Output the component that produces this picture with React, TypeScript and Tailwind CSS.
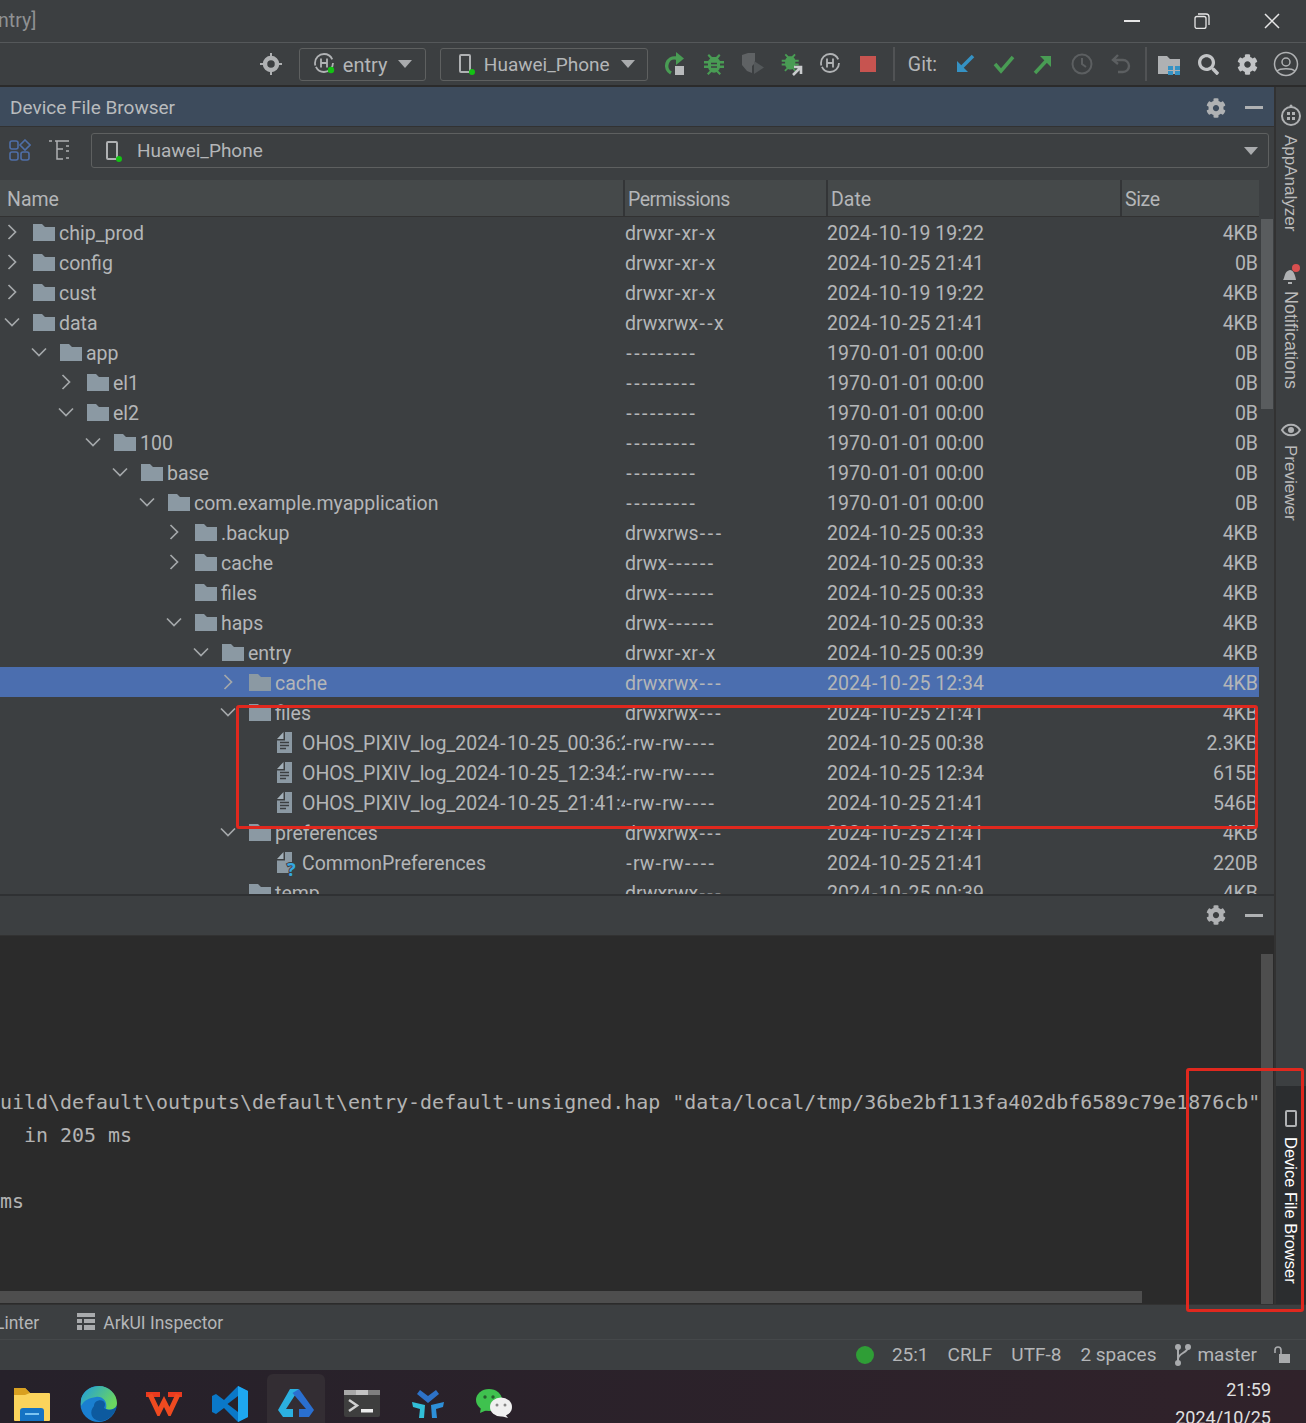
import { FaCog, FaSearch } from "react-icons/fa";

type Row = {
	name: string;
	level: number;
	arrow?: "open" | "closed";
	kind?: "folder" | "log" | "unknown";
	perm: string;
	date: string;
	size: string;
	selected?: boolean;
};

const rows: Row[] = [
	{ name: "chip_prod", level: 0, arrow: "closed", perm: "drwxr-xr-x", date: "2024-10-19 19:22", size: "4KB" },
	{ name: "config", level: 0, arrow: "closed", perm: "drwxr-xr-x", date: "2024-10-25 21:41", size: "0B" },
	{ name: "cust", level: 0, arrow: "closed", perm: "drwxr-xr-x", date: "2024-10-19 19:22", size: "4KB" },
	{ name: "data", level: 0, arrow: "open", perm: "drwxrwx--x", date: "2024-10-25 21:41", size: "4KB" },
	{ name: "app", level: 1, arrow: "open", perm: "---------", date: "1970-01-01 00:00", size: "0B" },
	{ name: "el1", level: 2, arrow: "closed", perm: "---------", date: "1970-01-01 00:00", size: "0B" },
	{ name: "el2", level: 2, arrow: "open", perm: "---------", date: "1970-01-01 00:00", size: "0B" },
	{ name: "100", level: 3, arrow: "open", perm: "---------", date: "1970-01-01 00:00", size: "0B" },
	{ name: "base", level: 4, arrow: "open", perm: "---------", date: "1970-01-01 00:00", size: "0B" },
	{ name: "com.example.myapplication", level: 5, arrow: "open", perm: "---------", date: "1970-01-01 00:00", size: "0B" },
	{ name: ".backup", level: 6, arrow: "closed", perm: "drwxrws---", date: "2024-10-25 00:33", size: "4KB" },
	{ name: "cache", level: 6, arrow: "closed", perm: "drwx------", date: "2024-10-25 00:33", size: "4KB" },
	{ name: "files", level: 6, perm: "drwx------", date: "2024-10-25 00:33", size: "4KB" },
	{ name: "haps", level: 6, arrow: "open", perm: "drwx------", date: "2024-10-25 00:33", size: "4KB" },
	{ name: "entry", level: 7, arrow: "open", perm: "drwxr-xr-x", date: "2024-10-25 00:39", size: "4KB" },
	{ name: "cache", level: 8, arrow: "closed", perm: "drwxrwx---", date: "2024-10-25 12:34", size: "4KB", selected: true },
	{ name: "files", level: 8, arrow: "open", perm: "drwxrwx---", date: "2024-10-25 21:41", size: "4KB" },
	{ name: "OHOS_PIXIV_log_2024-10-25_00:36:23.log", level: 9, kind: "log", perm: "-rw-rw----", date: "2024-10-25 00:38", size: "2.3KB" },
	{ name: "OHOS_PIXIV_log_2024-10-25_12:34:21.log", level: 9, kind: "log", perm: "-rw-rw----", date: "2024-10-25 12:34", size: "615B" },
	{ name: "OHOS_PIXIV_log_2024-10-25_21:41:44.log", level: 9, kind: "log", perm: "-rw-rw----", date: "2024-10-25 21:41", size: "546B" },
	{ name: "preferences", level: 8, arrow: "open", perm: "drwxrwx---", date: "2024-10-25 21:41", size: "4KB" },
	{ name: "CommonPreferences", level: 9, kind: "unknown", perm: "-rw-rw----", date: "2024-10-25 21:41", size: "220B" },
	{ name: "temp", level: 8, perm: "drwxrwx---", date: "2024-10-25 00:39", size: "4KB" },
];

// the reference font has much wider hyphens than Roboto
const Dashed = ({ text }: { text: string }) => (
	<>
		{text.split(/(-)/).map((part, i) =>
			part === "-" ? (
				<span key={i} className="px-[1.250px]">
					-
				</span>
			) : (
				part
			),
		)}
	</>
);

const Folder = () => (
	<svg width="22" height="17" viewBox="0 0 22 17" className="shrink-0">
		<path d="M0 0h9l3 3h10v14H0z" fill="#8b99a3" />
	</svg>
);

const FileIcon = ({ unknown }: { unknown?: boolean }) => (
	<svg width="15" height="21" viewBox="0 0 15 21" className="shrink-0 overflow-visible">
		<path d="M6.500 0v7H0z" fill="#a3b0b9" />
		<path d="M8 0h7v21H0V8.500h8z" fill="#8b99a3" />
		{!unknown && <path d="M3 10.500h9M3 13.500h9M3 16.500h6" stroke="#3c3f41" strokeWidth="1.300" />}
		{unknown && (
			<text
				x="10"
				y="24"
				fontSize="18"
				fontWeight="700"
				fill="#35a7e0"
				stroke="#3c3f41"
				strokeWidth="2"
				paintOrder="stroke"
				fontFamily="Noto Sans, sans-serif"
			>
				?
			</text>
		)}
	</svg>
);

const Arrow = ({ open }: { open?: boolean }) =>
	open ? (
		<svg width="16" height="10" viewBox="0 0 16 10" fill="none" stroke="#a4a8aa" strokeWidth="1.700">
			<path d="M1 1.500l7 7 7-7" />
		</svg>
	) : (
		<svg width="10" height="16" viewBox="0 0 10 16" fill="none" stroke="#a4a8aa" strokeWidth="1.700" className="ml-[3px]">
			<path d="M1.500 1l7 7-7 7" />
		</svg>
	);

const TreeRow = ({ row }: { row: Row }) => (
	<div className={`flex h-[30px] shrink-0 items-center pt-[3px] ${row.selected ? "bg-[#4b6eaf]" : ""}`}>
		<div className="flex h-full w-[625px] shrink-0 items-center overflow-hidden">
			<div className="shrink-0" style={{ width: row.level * 27 }} />
			<div className="-mt-[3px] flex w-[22px] shrink-0 justify-start pl-[4px]">
				{row.arrow === "closed" && <Arrow />}
				{row.arrow === "open" && <Arrow open />}
			</div>
			{row.kind === "log" || row.kind === "unknown" ? (
				<div className="-mt-[3px] flex w-[37px] shrink-0 justify-end pr-[10px]">
					<FileIcon unknown={row.kind === "unknown"} />
				</div>
			) : (
				<div className="-mt-[3px] flex w-[37px] shrink-0 pl-[11px]">
					<Folder />
				</div>
			)}
			<span className="whitespace-nowrap">
				<Dashed text={row.name} />
			</span>
		</div>
		<div className="w-[202px] shrink-0 overflow-hidden whitespace-nowrap">
			<Dashed text={row.perm} />
		</div>
		<div className="w-[360px] shrink-0 whitespace-nowrap">
			<Dashed text={row.date} />
		</div>
		<div className="flex-1 pr-[1px] text-right">{row.size}</div>
	</div>
);

const PhoneIcon = () => (
	<svg width="18" height="22" viewBox="0 0 18 22" className="shrink-0">
		<rect x="2" y="2" width="10" height="17" rx="1" fill="none" stroke="#afb1b3" strokeWidth="2" />
		<circle cx="14" cy="19" r="3" fill="#13c213" />
	</svg>
);

const HarmonyIcon = ({ dot }: { dot?: boolean }) => (
	<svg width="24" height="24" viewBox="0 0 24 24" className="shrink-0">
		<circle cx="11" cy="11" r="9" fill="none" stroke="#b1b3b5" strokeWidth="1.800" strokeDasharray="24 1.500 27 4" />
		<path d="M8 6.500v9M14 6.500v9M8 11h6" stroke="#b1b3b5" strokeWidth="1.800" fill="none" />
		{dot && <circle cx="18" cy="18" r="3.200" fill="#13c213" />}
	</svg>
);

const Caret = () => (
	<svg width="14" height="8" viewBox="0 0 14 8" className="shrink-0">
		<path d="M0 0h14L7 8z" fill="#a9abad" />
	</svg>
);

const BUG_PATH =
	"M7 2l3 3h4l3-3 1.500 1.500-2.500 3c1 .700 1.500 1.500 2 2.500H22v2.500h-4v2h4V16h-4.200c-.3 1-.8 2-1.600 2.700L19 21.500l-1.500 1.500-3-2.900c-1.600.8-3.400.8-5 0l-3 2.900L5 21.500l2.800-2.800c-.8-.7-1.300-1.700-1.600-2.700H2v-2.500h4v-2H2V9h4.200c.5-1 1-1.800 2-2.500l-2.700-3z";

const Bug = () => (
	<svg width="24" height="24" viewBox="0 0 24 24" className="shrink-0">
		<path d={BUG_PATH} fill="#499c54" />
		<path d="M9 11.500h6M9 15h6" stroke="#3c3f41" strokeWidth="1.500" />
	</svg>
);

const Divider = () => <div className="h-[34px] w-[2px] bg-[#515355]" />;

const ToolWindowLabel = ({ label, className }: { label: string; className: string }) => (
	<span className={`font-['Liberation_Sans',sans-serif] leading-[29px] whitespace-nowrap [writing-mode:vertical-rl] ${className}`}>{label}</span>
);

const PanelHeader = ({ title, blue }: { title?: string; blue?: boolean }) => (
	<div className={`flex h-[39px] shrink-0 items-center justify-between pr-[11px] pl-[10px] ${blue ? "bg-[#3d4b5c] pt-[2px]" : "bg-[#3c3f41] pb-[1px]"}`}>
		<span className="pt-[1px] text-[19px] text-[#b9bcbe]">{title}</span>
		<div className="flex items-center gap-[19px]">
			<FaCog size={20} className="text-[#afb1b3]" />
			<div className="h-[3px] w-[18px] bg-[#afb1b3]" />
		</div>
	</div>
);

const App = () => {
	return (
		<div className="relative flex h-[1423px] w-[1306px] flex-col overflow-hidden bg-[#3c3f41] font-['Roboto',sans-serif] text-[19.5px] text-[#b4b6b8]">
			{/* title bar */}
			<div className="flex h-[43px] shrink-0 items-center justify-between border-b border-[#55585a] pr-[26px]">
				<span className="-ml-[2px] text-[19.5px] text-[#8f9193]">ntry]</span>
				<div className="flex items-center gap-[54px] text-[#e6e6e6]">
					<div className="h-[2px] w-[16px] bg-[#e6e6e6]" />
					<svg width="16" height="16" viewBox="0 0 16 16" fill="none" stroke="currentColor" strokeWidth="1.300">
						<rect x="1" y="3.500" width="11" height="12" rx="2" />
						<path d="M4 1h8a3 3 0 0 1 3 3v8" />
					</svg>
					<svg width="16" height="16" viewBox="0 0 16 16" stroke="currentColor" strokeWidth="1.500">
						<path d="M1 1l14 14M15 1L1 15" />
					</svg>
				</div>
			</div>

			{/* toolbar */}
			<div className="flex h-[42px] shrink-0 items-center justify-end pr-[7px]">
				<svg width="22" height="22" viewBox="0 0 22 22" className="mr-[17px]">
					<circle cx="11" cy="11" r="6" fill="none" stroke="#afb1b3" strokeWidth="4.500" />
					<path d="M11 0v4M11 18v4M0 11h4M18 11h4" stroke="#afb1b3" strokeWidth="2" />
				</svg>
				<div className="mr-[14px] flex h-[33px] w-[127px] items-center rounded-[3px] border border-[#5e6060] pl-[13px]">
					<HarmonyIcon dot />
					<span className="ml-[6px] pt-[2px] text-[20px]">entry</span>
					<div className="ml-[11px]">
						<Caret />
					</div>
				</div>
				<div className="mr-[15px] flex h-[33px] w-[208px] items-center rounded-[3px] border border-[#5e6060] pl-[17px]">
					<PhoneIcon />
					<span className="ml-[8px] pt-[2px] text-[19px]">Huawei_Phone</span>
					<div className="ml-[11px]">
						<Caret />
					</div>
				</div>
				<div className="flex items-center gap-[15px]">
					<svg width="24" height="24" viewBox="0 0 24 24" fill="none">
						<path d="M8 21a8 8 0 0 1 5-15h3" stroke="#499c54" strokeWidth="3.500" />
						<path d="M13 0l8 6.500-8 6.500z" fill="#499c54" />
						<rect x="12" y="14" width="9" height="9" fill="#b8babc" />
					</svg>
					<Bug />
					<svg width="24" height="24" viewBox="0 0 24 24">
						<path d="M1 3l6-2h7v10l-3 3v7l-5-2-5-6z" fill="#5f6264" />
						<path d="M13 9l10 6.500L13 22z" fill="#54585a" />
					</svg>
					<svg width="24" height="24" viewBox="0 0 24 24">
						<g transform="scale(.85)">
							<path d={BUG_PATH} fill="#499c54" />
						</g>
						<path d="M13 23l7-7M14 15h7v7" stroke="#c9cbcd" strokeWidth="2.600" fill="none" />
					</svg>
					<HarmonyIcon />
					<div className="ml-[2px] h-[16px] w-[16px] bg-[#c75450]" />
					<div className="ml-[2px]">
						<Divider />
					</div>
				</div>
				<span className="ml-[13px] pt-[1px] text-[19.5px]">Git:</span>
				<div className="ml-[17px] flex items-center gap-[17px]">
					<svg width="22" height="22" viewBox="0 0 22 22" fill="none">
						<path d="M19 3L6 16" stroke="#3592c4" strokeWidth="3.500" />
						<path d="M3 8v11h11z" fill="#3592c4" />
					</svg>
					<svg width="22" height="22" viewBox="0 0 22 22" fill="none">
						<path d="M2 11l6 7L20 4" stroke="#499c54" strokeWidth="3.500" />
					</svg>
					<svg width="22" height="22" viewBox="0 0 22 22" fill="none">
						<path d="M3 20L16 6" stroke="#499c54" strokeWidth="3.500" />
						<path d="M8 3h11v11z" fill="#499c54" />
					</svg>
					<svg width="22" height="22" viewBox="0 0 22 22" fill="none" stroke="#5c5f61" strokeWidth="2">
						<circle cx="11" cy="11" r="9.500" />
						<path d="M11 5v6l4 3" />
					</svg>
					<svg width="22" height="22" viewBox="0 0 22 22" fill="none" stroke="#5c5f61" strokeWidth="2.400">
						<path d="M8 2L3 7l5 4M3 7h10a5.500 5.500 0 0 1 0 12H8" />
					</svg>
				</div>
				<div className="mr-[10px] ml-[13px]">
					<Divider />
				</div>
				<div className="flex items-center">
					<svg width="24" height="24" viewBox="0 0 24 24">
						<path d="M1 4h9l3 3h10v15H1z" fill="#afb1b3" />
						<rect x="11" y="14" width="5" height="4" fill="#3592c4" />
						<rect x="18" y="14" width="5" height="4" fill="#3592c4" />
						<rect x="11" y="19" width="5" height="4" fill="#3592c4" />
						<rect x="18" y="19" width="5" height="4" fill="#3592c4" />
					</svg>
					<FaSearch size={21} className="ml-[17px] text-[#c2c4c6]" />
					<FaCog size={21} className="ml-[18px] text-[#c2c4c6]" />
					<svg width="26" height="26" viewBox="0 0 26 26" fill="none" stroke="#afb1b3" strokeWidth="1.500" className="ml-[15px]">
						<circle cx="13" cy="13" r="11.500" />
						<circle cx="13" cy="11" r="4" />
						<path d="M4 20c3-3 15-3 18 0" />
					</svg>
				</div>
			</div>
			<div className="h-[2px] shrink-0 bg-[#2b2b2b]" />

			{/* main */}
			<div className="flex h-[1217px] shrink-0">
				<div className="flex w-[1274px] shrink-0 flex-col">
					<PanelHeader title="Device File Browser" blue />
					<div className="h-[1px] shrink-0 bg-[#323232]" />

					{/* device picker */}
					<div className="flex h-[53px] shrink-0 items-start pt-[6px] pr-[5px] pl-[9px]">
						<svg width="22" height="22" viewBox="0 0 22 22" fill="none" stroke="#4f6fa8" strokeWidth="1.600" className="mt-[6px]">
							<rect x="1" y="2" width="8" height="8" rx="2" />
							<path d="M16 1l5 5-5 5-5-5z" />
							<rect x="1" y="13" width="8" height="8" rx="2" />
							<rect x="12" y="13" width="8" height="8" rx="2" />
						</svg>
						<svg width="22" height="22" viewBox="0 0 22 22" fill="none" stroke="#afb1b3" strokeWidth="1.500" className="mt-[6px] ml-[17px]">
							<path d="M1 2h3M7 2h14M9 2v18h6M9 10h6M18 7h3M18 12h3M18 19h3" />
						</svg>
						<div className="ml-[21px] flex h-[35px] flex-1 items-center rounded-[3px] border border-[#5e6060] pr-[10px] pl-[13px]">
							<PhoneIcon />
							<span className="ml-[14px] flex-1 pt-[2px] text-[19px]">Huawei_Phone</span>
							<Caret />
						</div>
					</div>

					{/* file table */}
					<div className="flex h-[714px] shrink-0">
						<div className="flex w-[1259px] shrink-0 flex-col overflow-hidden">
							<div className="flex h-[37px] shrink-0 items-center border-b border-[#323232] bg-[#45494a]">
								<div className="h-full w-[623px] pt-[5px] pl-[7px]">Name</div>
								<div className="h-full w-[203px] border-l-2 border-[#333537] pt-[5px] pl-[3px] tracking-[-0.55px]">Permissions</div>
								<div className="h-full w-[294px] border-l-2 border-[#333537] pt-[5px] pl-[3px]">Date</div>
								<div className="h-full flex-1 border-l-2 border-[#333537] pt-[5px] pl-[3px] tracking-[-0.4px]">Size</div>
							</div>
							{rows.map((row, i) => (
								<TreeRow key={i} row={row} />
							))}
						</div>
						<div className="ml-[2px] w-[12px] shrink-0 pt-[39px]">
							<div className="h-[190px] bg-[#595c5e]" />
						</div>
					</div>
					<div className="h-[2px] shrink-0 bg-[#2f3133]" />

					<PanelHeader />
					<div className="h-[1px] shrink-0 bg-[#323232]" />

					{/* terminal */}
					<div className="flex min-h-0 flex-1 bg-[#2b2b2b]">
						<div className="flex min-w-0 flex-1 flex-col overflow-hidden">
							<div className="flex-1 pt-[150px] font-['DejaVu_Sans_Mono',monospace] text-[19.95px] leading-[33px] whitespace-pre text-[#b3b3b3]">
								<div>{'uild\\default\\outputs\\default\\entry-default-unsigned.hap "data/local/tmp/36be2bf113fa402dbf6589c79e1876cb"'}</div>
								<div>{"  in 205 ms"}</div>
								<div>&nbsp;</div>
								<div>ms</div>
							</div>
							<div className="mb-[1px] h-[12px] w-[1142px] shrink-0 bg-[#4e4e4e]" />
						</div>
						<div className="mr-[1px] ml-[1px] w-[12px] shrink-0 pt-[18px]">
							<div className="h-full bg-[#4e4e4e]" />
						</div>
					</div>
				</div>
				<div className="w-[2px] shrink-0 bg-[#323232]" />

				{/* right tool stripe */}
				<div className="flex flex-1 flex-col items-center">
					<svg width="22" height="24" viewBox="0 0 22 24" fill="none" className="mt-[16px] mr-[2px] shrink-0">
						<circle cx="11" cy="13" r="9" stroke="#afb1b3" strokeWidth="2" />
						<circle cx="11" cy="3" r="1.500" fill="#afb1b3" />
						<path d="M7 9h3v3H7zM12 9h3v3h-3zM7 14h3v3H7zM12 14h3v3h-3z" fill="#afb1b3" />
					</svg>
					<div className="mt-[8px] mr-[2px] flex h-[96px] shrink-0">
						<ToolWindowLabel label="AppAnalyzer" className="text-[17px] text-[#bbbbbb]" />
					</div>
					<svg width="22" height="24" viewBox="0 0 22 24" className="mt-[32px] mr-[2px] shrink-0">
						<path d="M3 17c2-2 1-9 7-10 3 0 5 4 6 10z" fill="#afb1b3" />
						<rect x="8" y="19" width="4" height="2" fill="#afb1b3" />
						<circle cx="16" cy="5" r="4" fill="#d94f4f" />
					</svg>
					<div className="mt-[4px] mr-[2px] flex h-[96px] shrink-0">
						<ToolWindowLabel label="Notifications" className="text-[18px] text-[#bbbbbb]" />
					</div>
					<svg width="22" height="16" viewBox="0 0 22 16" className="mt-[35px] mr-[2px] shrink-0">
						<path d="M2 8c4-7 14-7 18 0-4 7-14 7-18 0z" fill="none" stroke="#afb1b3" strokeWidth="2" />
						<circle cx="11" cy="8" r="3" fill="#afb1b3" />
					</svg>
					<div className="mt-[7px] mr-[2px] flex h-[72px] shrink-0">
						<ToolWindowLabel label="Previewer" className="text-[17px] text-[#bbbbbb]" />
					</div>
					<div className="mt-[569px] flex w-full flex-1 flex-col items-center bg-[#2b2d2f] pt-[23px] pr-[2px]">
						<svg width="14" height="20" viewBox="0 0 14 20" className="shrink-0" fill="none" stroke="#afb1b3" strokeWidth="2">
							<rect x="2" y="2" width="10" height="15" rx="1" />
						</svg>
						<div className="mt-[8px] flex">
							<ToolWindowLabel label="Device File Browser" className="text-[16.500px] text-white" />
						</div>
					</div>
				</div>
			</div>
			<div className="h-[1px] shrink-0 bg-[#323232]" />

			{/* tool window bar */}
			<div className="flex h-[35px] shrink-0 items-center border-b border-[#45484a] text-[17.500px]">
				<span className="-ml-[5px] pt-[2px]">Linter</span>
				<svg width="20" height="20" viewBox="0 0 20 20" fill="#a9abad" className="ml-[37px]">
					<path d="M1 1h18v4H1zM1 7h5v4H1zM8 7h11v4H8zM1 13h5v5H1zM8 13h11v5H8z" />
				</svg>
				<span className="ml-[7px] pt-[2px]">ArkUI Inspector</span>
			</div>

			{/* status bar */}
			<div className="flex h-[30px] shrink-0 items-center justify-end gap-[19px] pr-[15px] text-[19px]">
				<div className="mr-[-1px] h-[18px] w-[18px] rounded-full bg-[#2f9e36]" />
				<span>25:1</span>
				<span>CRLF</span>
				<span>UTF-8</span>
				<span>2 spaces</span>
				<div className="flex items-center gap-[6px]">
					<svg width="16" height="22" viewBox="0 0 16 22" fill="none" stroke="#a9abad" strokeWidth="2">
						<circle cx="3" cy="3" r="2" fill="#a9abad" />
						<circle cx="3" cy="19" r="2" fill="#a9abad" />
						<circle cx="13" cy="3" r="2" fill="#a9abad" />
						<path d="M3 3v16M13 3c0 6-10 6-10 12" />
					</svg>
					<span>master</span>
				</div>
				<svg width="18" height="18" viewBox="0 0 18 18" fill="none" className="-ml-[3px]">
					<path d="M2 7V4a3 3 0 0 1 6 0v4" stroke="#a9abad" strokeWidth="1.600" />
					<rect x="6" y="8" width="11" height="9" fill="#a9abad" />
				</svg>
			</div>

			{/* taskbar */}
			<div className="flex min-h-0 flex-1 items-start justify-between bg-linear-to-r from-[#26212a] to-[#30222a] pt-[4px]">
				<div className="flex items-start">
					{/* explorer */}
					<svg width="36" height="33" viewBox="0 0 36 33" className="mt-[14px] ml-[14px]">
						<path d="M0 1q0-1 1-1h10l5 5h19q1 0 1 1v26q0 1-1 1H1q-1 0-1-1z" fill="#fbd45c" />
						<path d="M0 1q0-1 1-1h10l5 5-5 2H0z" fill="#d9a020" />
						<path d="M6 33V23q0-3 3-3h18q3 0 3 3v10z" fill="#1573c4" />
						<rect x="11" y="25" width="14" height="2" fill="#7cc4f2" />
					</svg>
					{/* edge */}
					<svg width="37" height="36" viewBox="0 0 37 36" className="mt-[12px] ml-[30px]">
						<defs>
							<linearGradient id="edgeTop" x1="0" y1="0" x2="1" y2="0.500">
								<stop offset="0" stopColor="#1f9be0" />
								<stop offset="1" stopColor="#6ad65f" />
							</linearGradient>
						</defs>
						<circle cx="18.500" cy="18" r="18" fill="#1a7fd0" />
						<path d="M1 13C4 3 13 0 19 0c10 0 18 8 18 17 0 6-6 8-11 6 2-8-4-13-10-12C9 12 4 14 1 20z" fill="url(#edgeTop)" />
						<path d="M14 20c0-5 6-7 9-5 3 2 2 5 1 7 4 3 10 2 13-2-2 9-10 16-18 15-8-2-10-9-5-15z" fill="#0d5a9f" />
					</svg>
					{/* wps */}
					<svg width="36" height="24" viewBox="0 0 36 24" className="mt-[18px] ml-[29px]" fill="none" stroke="#ea3a1f" strokeWidth="5">
						<path d="M0 2.500h14M22 2.500h14" />
						<path d="M4 2.500l8.500 18 5.500-11 5.500 11 8.500-18" stroke="#ef4a20" />
					</svg>
					{/* vs code */}
					<svg width="36" height="36" viewBox="0 0 36 36" className="mt-[12px] ml-[30px]">
						<path d="M26 0l10 5v26l-10 5-14-14-8 6-4-2V10l4-2 8 6zM26 10l-10.500 8L26 26z" fill="#0a78c8" />
						<path d="M26 0l10 5v26l-10 5V26l0-16z" fill="#1ea7f0" />
					</svg>
					{/* deveco, active */}
					<div className="ml-[19px] flex h-[49px] w-[58px] justify-center rounded-t-[6px] bg-[#332d33] pt-[15px]">
						<svg width="36" height="28" viewBox="0 0 36 28">
							<path d="M12 0h9L8 20h7v8H5l-5-7z" fill="#2bb0e0" />
							<path d="M21 0l15 21-5 7H21v-8h7L14.500 4z" fill="#2a6fd0" />
							<path d="M18 11l-8 9h5v8h6v-8h5z" fill="#332d33" />
						</svg>
					</div>
					{/* terminal */}
					<svg width="36" height="27" viewBox="0 0 36 27" className="mt-[16px] ml-[19px]">
						<rect width="36" height="27" rx="2" fill="#3e3e3e" />
						<rect width="12" height="5" fill="#a8a8a8" />
						<rect x="12" width="12" height="5" fill="#c4c4c4" />
						<rect x="24" width="12" height="5" fill="#808080" />
						<path d="M5 10l8 5.500-8 5.500" stroke="#d0d0d0" strokeWidth="2.500" fill="none" />
						<rect x="17" y="19" width="12" height="3.500" fill="#ececec" />
					</svg>
					{/* star */}
					<svg width="32" height="28" viewBox="0 0 32 28" className="mt-[16px] ml-[32px]">
						<path d="M8 0l8 6 8-6 3 4-11 9L5 4z" fill="#2d72c8" />
						<path d="M0 12l13 3-1 13H7l1-9-7-2z" fill="#32bfd8" />
						<path d="M32 12l-13 3 1 13h5l-1-9 7-2z" fill="#2d8fd8" />
					</svg>
					{/* wechat */}
					<svg width="36" height="29" viewBox="0 0 36 29" className="mt-[15px] ml-[32px]">
						<ellipse cx="13" cy="11" rx="13" ry="11" fill="#3fc24f" />
						<path d="M5 18l-1 6 7-3z" fill="#3fc24f" />
						<circle cx="9" cy="8" r="1.700" fill="#26612e" />
						<circle cx="17" cy="8" r="1.700" fill="#26612e" />
						<ellipse cx="25" cy="18" rx="11" ry="9.500" fill="#f0f0f0" />
						<path d="M29 25l3 4-7-2z" fill="#f0f0f0" />
						<circle cx="21" cy="16" r="1.500" fill="#888888" />
						<circle cx="29" cy="16" r="1.500" fill="#888888" />
					</svg>
				</div>
				<div className="mr-[35px] flex flex-col items-end text-[18px] leading-[28px] text-[#e0e0e0]">
					<span className="mt-[2px]">21:59</span>
					<span>2024/10/25</span>
				</div>
			</div>

			{/* red annotation boxes */}
			<div className="absolute top-[705px] left-[236px] h-[124px] w-[1022px] rounded-[3px] border-[3px] border-[#e0281e]" />
			<div className="absolute top-[1068px] left-[1186px] h-[244px] w-[118px] rounded-[3px] border-[3px] border-[#e0281e]" />
		</div>
	);
};

export default App;
